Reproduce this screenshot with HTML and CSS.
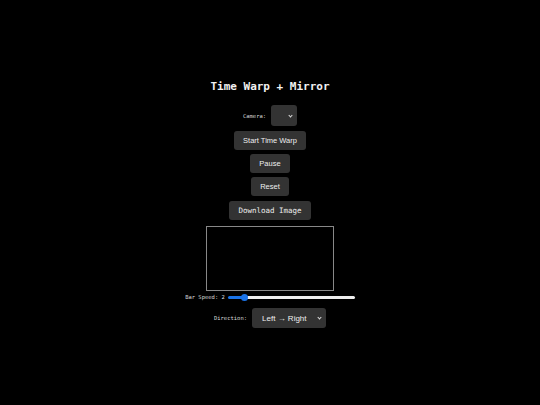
FILE: index.html
```html
<!DOCTYPE html>
<html lang="en">
<head>
    <meta charset="UTF-8">
    <meta name="viewport" content="width=device-width, initial-scale=1.0">
    <title>Time Warp + Mirror</title>
    <link rel="stylesheet" href="styles.css">
</head>
<body>

    <div class="app">
        <h1 class="title">Time Warp + Mirror</h1>

        <div class="row camera-row">
            <label for="camera-select">Camera:</label>
            <span class="select-wrap">
                <select id="camera-select"></select>
            </span>
        </div>

        <button class="btn" id="start-btn">Start Time Warp</button>
        <button class="btn" id="pause-btn">Pause</button>
        <button class="btn" id="reset-btn">Reset</button>
        <button class="btn btn-mono" id="download-btn">Download Image</button>

        <canvas id="output" width="126" height="63"></canvas>

        <div class="row speed-row">
            <label for="speed">Bar Speed: <span id="speed-value">2</span></label>
            <input type="range" id="speed" min="1" max="10" value="2" style="--fill: 11%;">
        </div>

        <div class="row direction-row">
            <label for="direction">Direction:</label>
            <span class="select-wrap">
                <select id="direction">
                    <option>Left → Right</option>
                    <option>Right → Left</option>
                    <option>Top → Bottom</option>
                    <option>Bottom → Top</option>
                </select>
            </span>
        </div>
    </div>

</body>
</html>
```

FILE: styles.css
```css
body {
    margin: 0;
    padding: 0;
    background-color: #000;
    color: #e8e8e8;
    font-family: "DejaVu Sans Mono", monospace;
}
.app {
    display: flex;
    flex-direction: column;
    align-items: center;
    gap: 4px;
    padding-top: 80px;
}
.title {
    margin: 0 0 7px 0;
    font-size: 11px;
    line-height: 14px;
    font-weight: bold;
    color: #f2f2f2;
}
.row {
    display: flex;
    align-items: center;
    gap: 5px;
}
.row label {
    font-size: 5.5px;
    color: #d8d8d8;
}

/* selects: flat dark box with a small chevron drawn on top */
.select-wrap {
    position: relative;
    display: inline-flex;
}
.select-wrap::after {
    content: "";
    position: absolute;
    right: 5px;
    top: 50%;
    width: 2px;
    height: 2px;
    margin-top: -2px;
    border-right: 1px solid #ddd;
    border-bottom: 1px solid #ddd;
    transform: rotate(45deg);
    pointer-events: none;
}
select {
    -webkit-appearance: none;
    appearance: none;
    background-color: #333;
    color: #eee;
    border: none;
    border-radius: 3px;
    font-family: "Liberation Sans", Arial, sans-serif;
    font-size: 8px;
    margin: 0;
    outline: none;
}
#camera-select {
    width: 26px;
    height: 21px;
}
.camera-row {
    margin-bottom: 1px;
}
#direction {
    width: 74px;
    height: 20px;
    padding: 0 0 0 10px;
}
.btn {
    padding: 5px 9px;
    font-family: "Liberation Sans", Arial, sans-serif;
    font-size: 7.5px;
    line-height: 9px;
    background-color: #333;
    color: #eee;
    border: none;
    border-radius: 3px;
    cursor: pointer;
}
.btn:hover {
    background-color: #444;
}
.btn-mono {
    font-family: "DejaVu Sans Mono", monospace;
    margin-top: 1px;
}
#output {
    margin-top: 2px;
    width: 126px;
    height: 63px;
    border: 1px solid #888;
    background-color: #000;
}
.speed-row {
    gap: 3px;
    height: 10px;
    margin-top: -3px;
}
.speed-row input[type="range"] {
    -webkit-appearance: none;
    appearance: none;
    width: 127px;
    height: 8px;
    margin: 0;
    background: transparent;
}
.speed-row input[type="range"]::-webkit-slider-runnable-track {
    height: 3px;
    border-radius: 2px;
    background: linear-gradient(to right, #1a73e8 0 var(--fill), #eee var(--fill) 100%);
}
.speed-row input[type="range"]::-webkit-slider-thumb {
    -webkit-appearance: none;
    width: 7px;
    height: 7px;
    margin-top: -2px;
    border-radius: 50%;
    background-color: #1a73e8;
    border: none;
}
.direction-row {
    margin-top: 2px;
}
```
